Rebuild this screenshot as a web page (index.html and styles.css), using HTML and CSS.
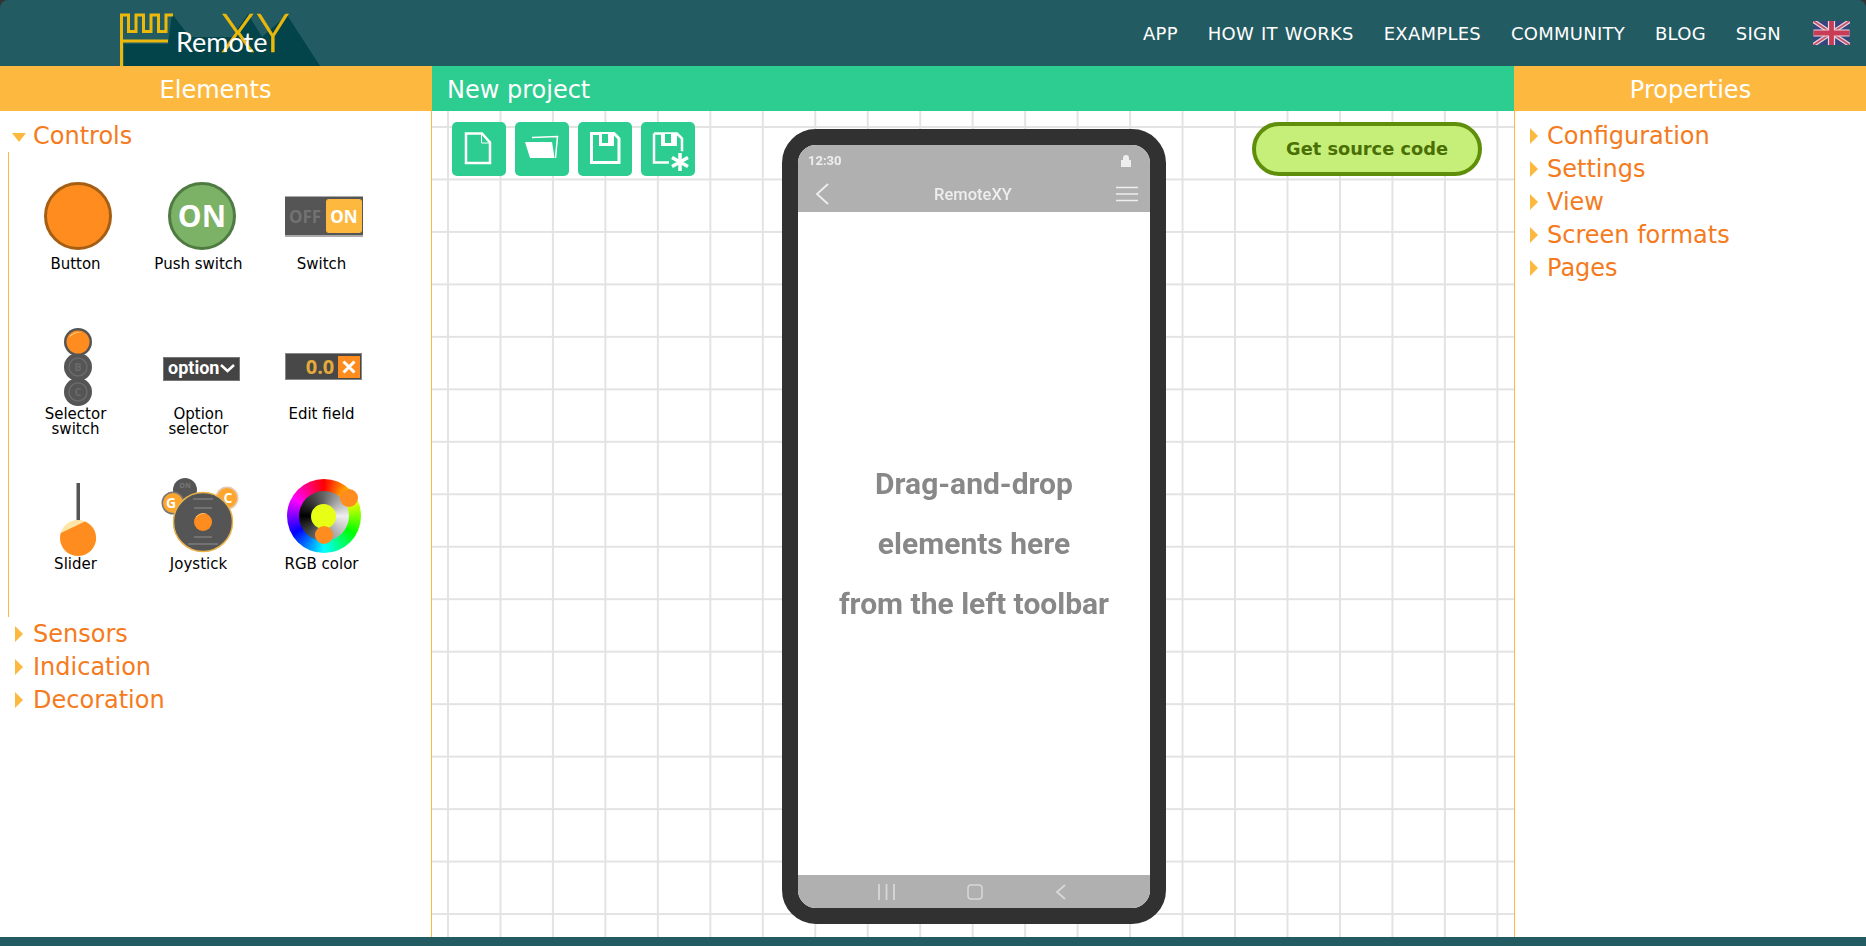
FILE: index.html
```html
<!DOCTYPE html>
<html lang="en">
<head>
	<meta charset="utf-8">
	<title>RemoteXY</title>
	<link rel="stylesheet" href="styles.css">
</head>
<body>

<header class="topbar">
	<a class="logo" href="#">
		<svg width="340" height="66" viewBox="0 0 340 66">
			<path d="M124 44H168L172 14L190 37H232L248 14L262 37L287 15L320 66H124Z" fill="#03434a"/>
			<path d="M121.500 66V15H128.500V31.500H136V15H143.500V31.500H151V15H158.500V31.500H166V15H173M121.500 41H168" fill="none" stroke="#ecb90b" stroke-width="3"/>
			<text class="logo-xy" x="221" y="52">XY</text>
			<text class="logo-remote" x="176" y="52">Remote</text>
		</svg>
	</a>
	<nav class="topnav">
		<a href="#">APP</a>
		<a href="#">HOW IT WORKS</a>
		<a href="#">EXAMPLES</a>
		<a href="#">COMMUNITY</a>
		<a href="#">BLOG</a>
		<a href="#">SIGN</a>
		<svg class="flag" width="37" height="24" viewBox="0 0 60 40">
			<rect width="60" height="40" fill="#35457f"/>
			<path d="M0 0L60 40M60 0L0 40" stroke="#e6d6dc" stroke-width="7"/>
			<path d="M0 0L60 40M60 0L0 40" stroke="#c8506c" stroke-width="3"/>
			<path d="M30 0V40M0 20H60" stroke="#e6d6dc" stroke-width="12"/>
			<path d="M30 0V40M0 20H60" stroke="#c83c58" stroke-width="8"/>
		</svg>
	</nav>
</header>

<main class="workspace">

	<aside class="panel panel-left">
		<h2 class="panel-title">Elements</h2>
		<div class="tree">
			<div class="tree-head tree-open">Controls</div>
			<div class="element-grid">

				<div class="element">
					<div class="element-icon">
						<svg width="80" height="80" viewBox="0 0 80 80">
							<circle cx="40" cy="39" r="32.500" fill="#ff8c1e" stroke="#a55f14" stroke-width="3"/>
						</svg>
					</div>
					<span class="element-label">Button</span>
				</div>

				<div class="element">
					<div class="element-icon">
						<svg width="80" height="80" viewBox="0 0 80 80">
							<circle cx="41" cy="39" r="32.500" fill="#7cb265" stroke="#4f7a42" stroke-width="3"/>
							<text class="icon-text" x="41" y="50" font-size="30" fill="#fff">ON</text>
						</svg>
					</div>
					<span class="element-label">Push switch</span>
				</div>

				<div class="element">
					<div class="element-icon">
						<svg width="80" height="80" viewBox="0 0 80 80">
							<rect x="1" y="19" width="78" height="41" fill="#aaa"/>
							<rect x="1" y="20" width="78" height="38" fill="#555"/>
							<rect x="42" y="22" width="36" height="34" rx="3" fill="#fdb93f"/>
							<text class="icon-text" x="21" y="46" font-size="17" fill="#727272">OFF</text>
							<text class="icon-text" x="60" y="46" font-size="17" fill="#fff">ON</text>
						</svg>
					</div>
					<span class="element-label">Switch</span>
				</div>

				<div class="element">
					<div class="element-icon">
						<svg width="80" height="80" viewBox="0 0 80 80">
							<circle cx="40" cy="65" r="14" fill="#555"/>
							<circle cx="40" cy="65" r="9" fill="none" stroke="#6a6a6a" stroke-width="1.500"/>
							<text class="icon-text" x="40" y="69" font-size="11" fill="#6a6a6a">C</text>
							<circle cx="40" cy="40" r="14" fill="#555"/>
							<circle cx="40" cy="40" r="9" fill="none" stroke="#6a6a6a" stroke-width="1.500"/>
							<text class="icon-text" x="40" y="44" font-size="11" fill="#6a6a6a">B</text>
							<circle cx="40" cy="15" r="14" fill="#555"/>
							<circle cx="40" cy="15" r="11.500" fill="#ff8c1e"/>
							<path d="M31 11A10 10 0 0 1 44 6A14 14 0 0 0 31 11Z" fill="#fde6a8"/>
						</svg>
					</div>
					<span class="element-label">Selector<br>switch</span>
				</div>

				<div class="element">
					<div class="element-icon">
						<svg width="80" height="80" viewBox="0 0 80 80">
							<rect x="2.500" y="30.500" width="76" height="23" fill="#444" stroke="#777"/>
							<text class="icon-option" x="7" y="47">option</text>
							<path d="M60 38L66.500 44L73 38" fill="none" stroke="#fff" stroke-width="2.500"/>
						</svg>
					</div>
					<span class="element-label">Option<br>selector</span>
				</div>

				<div class="element">
					<div class="element-icon">
						<svg width="80" height="80" viewBox="0 0 80 80">
							<rect x="1.500" y="26.500" width="76" height="26" fill="#484848" stroke="#888"/>
							<text class="icon-text" x="36" y="47" font-size="20" fill="#e4aa3a">0.0</text>
							<rect x="54" y="29" width="22" height="22" fill="#ff8c1e"/>
							<path d="M59.500 34.500L70.500 45.500M70.500 34.500L59.500 45.500" stroke="#fff" stroke-width="3"/>
						</svg>
					</div>
					<span class="element-label">Edit field</span>
				</div>

				<div class="element">
					<div class="element-icon">
						<svg width="80" height="80" viewBox="0 0 80 80">
							<rect x="38.500" y="6" width="3.500" height="40" fill="#555"/>
							<circle cx="40" cy="61" r="18" fill="#fde6a8"/>
							<path d="M22.800 56L47 44.400A18 18 0 1 1 22.800 56Z" fill="#ff8c1e"/>
						</svg>
					</div>
					<span class="element-label">Slider</span>
				</div>

				<div class="element">
					<div class="element-icon">
						<svg width="80" height="80" viewBox="0 0 80 80">
							<circle cx="24" cy="13" r="12" fill="#555"/>
							<text class="icon-text" x="24" y="11" font-size="7" fill="#777">ON</text>
							<circle cx="12" cy="26" r="11.500" fill="#777"/>
							<circle cx="12" cy="26" r="10" fill="#fca62e"/>
							<text class="icon-text" x="10" y="31" font-size="14" fill="#fff">G</text>
							<circle cx="66" cy="21" r="11.500" fill="#e6c8b0"/>
							<circle cx="66" cy="21" r="10" fill="#fca62e"/>
							<text class="icon-text" x="67" y="26" font-size="14" fill="#fff">C</text>
							<circle cx="42" cy="45" r="29.500" fill="#555" stroke="#e8b34a" stroke-width="1.500"/>
							<path d="M32 22H52M33 31H51M33 60H51M27 67H57" stroke="#727272" stroke-width="2"/>
							<circle cx="42" cy="45" r="9" fill="#ff8c1e"/>
							<path d="M34 42A9 9 0 0 1 46 37A12 12 0 0 0 34 42Z" fill="#fde6a8"/>
						</svg>
					</div>
					<span class="element-label">Joystick</span>
				</div>

				<div class="element">
					<div class="element-icon">
						<div class="rgb-wheel">
							<div class="rgb-inner">
								<div class="rgb-center"></div>
							</div>
							<span class="rgb-handle rgb-handle-top"></span>
							<span class="rgb-handle rgb-handle-bottom"></span>
						</div>
					</div>
					<span class="element-label">RGB color</span>
				</div>

			</div>
			<div class="tree-head">Sensors</div>
			<div class="tree-head">Indication</div>
			<div class="tree-head">Decoration</div>
		</div>
	</aside>

	<section class="center">
		<h2 class="project-title">New project</h2>
		<div class="canvas">

			<div class="toolbar">
				<button class="tool-btn" type="button" title="New">
					<svg width="54" height="54" viewBox="0 0 54 54">
						<path d="M14 11.500H30L38 20.500V41H14Z" fill="none" stroke="#fff" stroke-width="2.500"/>
						<path d="M29.500 11.500V21H38" fill="none" stroke="#fff" stroke-width="1"/>
					</svg>
				</button>
				<button class="tool-btn" type="button" title="Open">
					<svg width="54" height="54" viewBox="0 0 54 54">
						<path d="M10 20H37L39.500 36H15Z" fill="#fff"/>
						<path d="M17 15.500L42.500 14.500L40.500 36" fill="none" stroke="#fff" stroke-width="1.500"/>
					</svg>
				</button>
				<button class="tool-btn" type="button" title="Save">
					<svg width="54" height="54" viewBox="0 0 54 54">
						<path d="M13.500 11.500H36L41 16.500V40.500H13.500Z" fill="none" stroke="#fff" stroke-width="3"/>
						<path d="M21 12H36V24H21Z" fill="#fff"/>
						<rect x="24" y="12" width="6" height="9" fill="#2dcc90"/>
					</svg>
				</button>
				<button class="tool-btn" type="button" title="Save as">
					<svg width="54" height="54" viewBox="0 0 54 54">
						<path d="M13 11.500H36L41 16.500V30M36 40.500H13V11.500" fill="none" stroke="#fff" stroke-width="2.500"/>
						<path d="M20 12H36V24H20Z" fill="#fff"/>
						<rect x="24" y="12" width="6" height="9" fill="#2dcc90"/>
						<circle cx="39" cy="40" r="11" fill="#2dcc90"/>
						<path d="M39 31V49M31 35.500L47 44.500M47 35.500L31 44.500" stroke="#fff" stroke-width="3.500"/>
					</svg>
				</button>
			</div>

			<div class="phone">
				<div class="phone-head">
					<div class="phone-status">
						<span class="phone-time">12:30</span>
						<svg width="12" height="14" viewBox="0 0 12 14">
							<path d="M3 6V4A3 3 0 0 1 9 4V6H11V13H1V6Z" fill="#eee"/>
						</svg>
					</div>
					<div class="phone-nav">
						<svg width="16" height="24" viewBox="0 0 16 24">
							<path d="M14 2L3 12L14 22" fill="none" stroke="#eee" stroke-width="1.800"/>
						</svg>
						<span class="phone-name">RemoteXY</span>
						<svg width="22" height="16" viewBox="0 0 22 16">
							<path d="M0 1.500H22M0 8H22M0 14.500H22" stroke="#eee" stroke-width="1.500"/>
						</svg>
					</div>
				</div>
				<div class="phone-screen">
					<p>Drag-and-drop</p>
					<p>elements here</p>
					<p>from the left toolbar</p>
				</div>
				<div class="phone-foot">
					<svg width="17" height="16" viewBox="0 0 17 16">
						<path d="M1 0V16M8.500 0V16M16 0V16" stroke="#d8d8d8" stroke-width="1.800"/>
					</svg>
					<svg width="16" height="16" viewBox="0 0 16 16">
						<rect x="1" y="1" width="14" height="14" rx="3" fill="none" stroke="#d8d8d8" stroke-width="1.500"/>
					</svg>
					<svg width="11" height="16" viewBox="0 0 11 16">
						<path d="M10 1L2 8L10 15" fill="none" stroke="#d8d8d8" stroke-width="1.800"/>
					</svg>
				</div>
			</div>

			<button class="source-btn" type="button">Get source code</button>
		</div>
	</section>

	<aside class="panel panel-right">
		<h2 class="panel-title">Properties</h2>
		<div class="tree">
			<div class="tree-head">Configuration</div>
			<div class="tree-head">Settings</div>
			<div class="tree-head">View</div>
			<div class="tree-head">Screen formats</div>
			<div class="tree-head">Pages</div>
		</div>
	</aside>

</main>

<footer class="bottombar"></footer>

</body>
</html>
```

FILE: styles.css
```css
html, body {
	margin: 0;
	height: 100%;
}
body {
	background-color: #333;
	font-family: "DejaVu Sans", sans-serif;
	display: flex;
	flex-direction: column;
	height: 946px;
	overflow: hidden;
}

/* top bar */
.topbar {
	height: 66px;
	flex: none;
	display: flex;
	justify-content: space-between;
	background-color: #235b62;
	border-radius: 8px 8px 0 0;
}
.logo {
	display: block;
	height: 66px;
}
.logo svg {
	display: block;
}
.logo-remote {
	font-family: Lato, sans-serif;
	font-size: 27px;
	fill: #fff;
}
.logo-xy {
	font-family: Lato, sans-serif;
	font-weight: 300;
	font-size: 54px;
	letter-spacing: 2px;
	fill: #ecb90b;
	stroke: #ecb90b;
	stroke-width: 0.6px;
}
.topnav {
	display: flex;
	align-items: center;
	gap: 30px;
	padding-right: 16px;
}
.topnav a {
	color: #fff;
	text-decoration: none;
	font-size: 18px;
	letter-spacing: 0.25px;
	word-spacing: 1px;
}
.flag {
	margin-left: 2px;
}

/* panels */
.workspace {
	flex: 1;
	display: flex;
	min-height: 0;
	background-color: #fff;
}
.panel {
	flex: none;
	box-sizing: border-box;
	background-color: #fff;
}
.panel-left {
	width: 432px;
	border-right: 1px solid #fdb93f;
}
.panel-right {
	width: 352px;
	border-left: 1px solid #fdb93f;
}
.panel-title {
	margin: 0;
	height: 45px;
	line-height: 48px;
	text-align: center;
	background-color: #fdb93f;
	color: #fff;
	font-size: 24px;
	font-weight: normal;
}
.tree {
	padding-top: 8px;
}
.tree-head {
	display: flex;
	align-items: center;
	height: 33px;
	padding-left: 15px;
	color: #f47b20;
	font-size: 24px;
}
.tree-head::before {
	content: "";
	margin-right: 10px;
	border-style: solid;
	border-width: 8px 0 8px 8px;
	border-color: transparent transparent transparent #fdb93f;
}
.panel-right .tree-head::before {
	margin-right: 9px;
}
.tree-open {
	padding-left: 12px;
}
.tree-open::before {
	margin-right: 7px;
	margin-top: 4px;
	border-width: 9px 7.500px 0 7.500px;
	border-color: #fdb93f transparent transparent transparent;
}

/* elements list */
.element-grid {
	margin-left: 8px;
	border-left: 1px solid #fdb93f;
	padding: 25px 0 0 5px;
	display: grid;
	grid-template-columns: repeat(3, 123px);
	grid-auto-rows: 140px;
	row-gap: 10px;
}
.element {
	display: flex;
	flex-direction: column;
	align-items: center;
}
.element-icon {
	width: 80px;
	height: 80px;
	margin-left: 4px;
	flex: none;
}
.element-icon svg {
	display: block;
}
.element-label {
	font-size: 15px;
	line-height: 15px;
	text-align: center;
	color: #000;
}
.icon-text {
	font-family: "Open Sans", sans-serif;
	font-weight: 700;
	text-anchor: middle;
}
.icon-option {
	font-family: Roboto, sans-serif;
	font-weight: 700;
	font-size: 18px;
	fill: #fff;
}

/* rgb wheel can't be done with svg gradients */
.rgb-wheel {
	position: relative;
	width: 74px;
	height: 74px;
	margin: 2px 0 0 3px;
	border-radius: 50%;
	display: flex;
	align-items: center;
	justify-content: center;
	background: conic-gradient(#f00, #ff0, #0f0, #0ff, #00f, #f0f, #f00);
}
.rgb-inner {
	width: 50px;
	height: 50px;
	border-radius: 50%;
	display: flex;
	align-items: center;
	justify-content: center;
	background: conic-gradient(#666, #eee 90deg, #888 180deg, #000 270deg, #666);
}
.rgb-center {
	width: 25px;
	height: 25px;
	border-radius: 50%;
	background-color: #e6ff14;
}
.rgb-handle {
	position: absolute;
	width: 18px;
	height: 18px;
	border-radius: 50%;
	background-color: #ff8c1e;
}
.rgb-handle-top {
	left: 53px;
	top: 10px;
}
.rgb-handle-bottom {
	left: 28px;
	top: 47px;
}

/* middle */
.center {
	flex: 1;
	min-width: 0;
	display: flex;
	flex-direction: column;
}
.project-title {
	margin: 0;
	height: 45px;
	line-height: 48px;
	padding-left: 15px;
	background-color: #2dcc90;
	color: #fff;
	font-size: 24px;
	font-weight: normal;
}
.canvas {
	flex: 1;
	min-height: 0;
	box-sizing: border-box;
	padding: 11px 18px 0 20px;
	display: grid;
	grid-template-columns: 330px 384px 330px;
	align-items: start;
	background-color: #fff;
	background-image:
		linear-gradient(to right, #e3e3e3 2px, transparent 2px),
		linear-gradient(to bottom, #e3e3e3 2px, transparent 2px);
	background-size: 52.470px 52.470px;
	background-position: 15px 15px;
}
.toolbar {
	display: flex;
	gap: 9px;
}
.tool-btn {
	width: 54px;
	height: 54px;
	padding: 0;
	border: 0;
	border-radius: 5px;
	background-color: #2dcc90;
}
.tool-btn svg {
	display: block;
}
.source-btn {
	justify-self: end;
	margin-right: 14px;
	width: 230px;
	height: 54px;
	padding: 0 0 2px;
	border: 4px solid #5f8f0a;
	border-radius: 27px;
	background-color: #c6ef7a;
	color: #4a6f05;
	font-family: "DejaVu Sans", sans-serif;
	font-weight: bold;
	font-size: 17.800px;
}

/* phone */
.phone {
	box-sizing: border-box;
	width: 384px;
	height: 795px;
	margin-top: 7px;
	border: 16px solid #313131;
	border-radius: 34px;
	overflow: hidden;
	display: flex;
	flex-direction: column;
	background-color: #fff;
	font-family: Roboto, sans-serif;
}
.phone-head {
	height: 67px;
	flex: none;
	box-sizing: border-box;
	padding: 0 12px 0 10px;
	background-color: #b0b0b0;
	color: #eee;
}
.phone-status {
	height: 31px;
	display: flex;
	align-items: center;
	justify-content: space-between;
	padding-right: 6px;
	filter: blur(0.4px);
}
.phone-time {
	font-size: 13px;
	font-weight: 700;
}
.phone-nav {
	height: 36px;
	display: flex;
	align-items: center;
	justify-content: space-between;
	padding-left: 6px;
	filter: blur(0.4px);
}
.phone-name {
	font-size: 16.500px;
	font-weight: 500;
}
.phone-screen {
	flex: 1;
	display: flex;
	flex-direction: column;
	justify-content: center;
	text-align: center;
	color: #888;
	font-size: 30px;
	font-weight: 700;
}
.phone-screen p {
	margin: 0;
	line-height: 60px;
	filter: blur(0.4px);
}
.phone-foot {
	height: 33px;
	flex: none;
	box-sizing: border-box;
	padding-right: 4px;
	display: flex;
	align-items: center;
	justify-content: center;
	gap: 72px;
	background-color: #b0b0b0;
}

.bottombar {
	height: 9px;
	flex: none;
	background-color: #235b62;
}
```
